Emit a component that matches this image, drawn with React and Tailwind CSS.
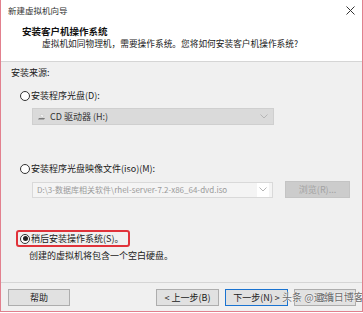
import React from "react";

const font = { fontFamily: '"Noto Sans CJK SC", "Noto Sans", sans-serif' };

function Radio({ checked }) {
  return (
    <span className="w-[10px] h-[10px] rounded-full border border-[#333] bg-white flex items-center justify-center shrink-0">
      {checked && <span className="w-[5px] h-[5px] rounded-full bg-[#222]" />}
    </span>
  );
}

function Chevron() {
  return (
    <svg width="8" height="5" viewBox="0 0 8 5" className="shrink-0">
      <path d="M0.5 0.5 L4 4 L7.5 0.5" fill="none" stroke="#b5b5b5" strokeWidth="1" />
    </svg>
  );
}

export default function App() {
  return (
    <div
      className="w-[363px] h-[312px] border-x border-b border-[#e2808e] bg-[#f0f0f0] flex flex-col text-[9px] leading-[12px] text-[#1a1a1a] overflow-hidden"
      style={font}
    >
      {/* title bar */}
      <div className="h-[20px] shrink-0 bg-white flex items-center justify-between pl-[7px] pr-[7px]">
        <span className="text-[8.5px] text-[#333]">新建虚拟机向导</span>
        <svg width="9" height="9" viewBox="0 0 9 9">
          <path d="M0.5 0.5 L8.5 8.5 M8.5 0.5 L0.5 8.5" stroke="#333" strokeWidth="1" />
        </svg>
      </div>
      {/* header */}
      <div className="h-[42px] shrink-0 bg-white border-b border-[#d5d5d5] pt-[5px] pl-[21px] flex flex-col">
        <div className="font-bold text-[9.5px] leading-[13px] text-[#111]">安装客户机操作系统</div>
        <div className="pl-[20px] text-[8.7px] leading-[12px]">虚拟机如同物理机，需要操作系统。您将如何安装客户机操作系统?</div>
      </div>
      {/* body */}
      <div className="flex-1 flex flex-col">
        <div className="h-[5px] shrink-0" />
        <div className="pl-[10px] h-[12px] shrink-0">安装来源:</div>
        <div className="h-[11px] shrink-0" />
        <div className="pl-[19px] flex items-center h-[12px] shrink-0">
          <Radio />
          <span className="ml-[1px]">安装程序光盘(D):</span>
        </div>
        <div className="h-[6px] shrink-0" />
        <div className="ml-[31px] w-[242px] h-[17px] shrink-0 bg-[#dadada] border border-[#cfcfcf] flex items-center pl-[4px] pr-[5px]">
          <svg width="9" height="9" viewBox="0 0 9 9" className="shrink-0">
            <path d="M1 7.5 L7 7.5 L8 6 L2 6 Z" fill="#7a7a7a" />
            <path d="M4 2 L7 3.5 L6 5.5 L3 4 Z" fill="#f4f4f4" stroke="#bdbdbd" strokeWidth="0.5" />
          </svg>
          <span className="ml-[4px] text-[#333]">CD 驱动器 (H:)</span>
          <span className="flex-1" />
          <Chevron />
        </div>
        <div className="h-[38px] shrink-0" />
        <div className="pl-[19px] flex items-center h-[12px] shrink-0">
          <Radio />
          <span className="ml-[1px]">安装程序光盘映像文件(iso)(M):</span>
        </div>
        <div className="h-[6px] shrink-0" />
        <div className="flex items-center h-[17px] shrink-0">
          <div className="ml-[31px] w-[241px] h-[16px] bg-[#f4f4f4] border border-[#d9d9d9] flex items-center pl-[4px] pr-[3px]">
            <span className="text-[8px] text-[#9a9a9a] whitespace-nowrap">D:\3-数据库相关软件\rhel-server-7.2-x86_64-dvd.iso</span>
            <span className="flex-1" />
            <span className="h-[14px] w-[12px] bg-white flex items-center justify-center">
              <Chevron />
            </span>
          </div>
          <div className="ml-[12px] w-[65px] h-[17px] bg-[#cccccc] border border-[#c4c4c4] flex items-center justify-center text-[#a3a3a3]">
            浏览(R)...
          </div>
        </div>
        <div className="h-8 shrink-0" />
        <div className="ml-[15px] w-[114px] h-[17px] shrink-0 border-2 border-[#e0323a] rounded-[3px] flex items-center pl-[2px]">
          <Radio checked />
          <span className="ml-[1px]">稍后安装操作系统(S)。</span>
        </div>
        <div className="h-[3px] shrink-0" />
        <div className="pl-[28px] h-[12px] shrink-0">创建的虚拟机将包含一个空白硬盘。</div>
      </div>
      {/* footer */}
      <div className="h-[29px] shrink-0 border-t border-[#d5d5d5] flex items-start pt-[6px] pl-[7px]">
        <div className="w-[62px] h-[17px] bg-[#e1e1e1] border border-[#adadad] flex items-center justify-center">帮助</div>
        <div className="ml-[86px] w-[63px] h-[17px] bg-[#e1e1e1] border border-[#adadad] flex items-center justify-center">&lt; 上一步(B)</div>
        <div className="ml-[6px] w-[63px] h-[17px] bg-[#e1e1e1] border-[1.5px] border-[#1a73d0] flex items-center justify-center">下一步(N) &gt;</div>
        <div className="relative ml-[6px] w-[62px] h-[17px] bg-[#e1e1e1] border border-[#adadad] flex items-center justify-center">
          <span>取消</span>
          <span
            className="absolute left-[-13px] top-[1px] whitespace-nowrap text-[10px] text-[#6b6b6b]"
            style={{ textShadow: "0 0 2px #fff, 0 0 1px #fff" }}
          >
            头条 @运维日博客
          </span>
        </div>
      </div>
    </div>
  );
}
